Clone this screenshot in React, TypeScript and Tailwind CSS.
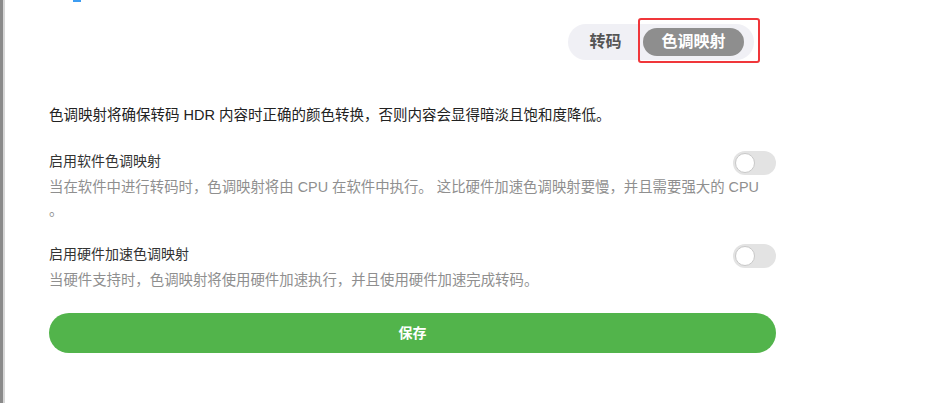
import { useState } from "react";

type ToggleProps = {
  on: boolean;
  onChange: () => void;
};

function Toggle({ on, onChange }: ToggleProps) {
  return (
    <button
      onClick={onChange}
      className={
        on
          ? "relative w-[43px] h-[24px] rounded-full bg-[#52b44b] shrink-0"
          : "relative w-[43px] h-[24px] rounded-full bg-[#e3e3e3] shrink-0"
      }
    >
      <span
        className={
          on
            ? "absolute top-[2px] left-[21px] w-[20px] h-[20px] rounded-full bg-white border border-[#c8c8c8]"
            : "absolute top-[2px] left-[2px] w-[20px] h-[20px] rounded-full bg-white border border-[#c8c8c8]"
        }
      />
    </button>
  );
}

type SettingProps = {
  title: string;
  desc: string;
  on: boolean;
  onChange: () => void;
};

function SettingRow({ title, desc, on, onChange }: SettingProps) {
  return (
    <div>
      <div className="flex items-start justify-between">
        <div className="text-[14px] leading-[20px] text-[#333]">
          {title}
        </div>
        <Toggle on={on} onChange={onChange} />
      </div>
      <div className="mt-[1px] pr-[4px] text-[14.4px] leading-[23px] text-[#8f8f8f]">
        {desc}
      </div>
    </div>
  );
}

export default function App() {
  const [tab, setTab] = useState("tonemap");
  const [soft, setSoft] = useState(false);
  const [hard, setHard] = useState(false);

  return (
    <div
      className="w-[932px] h-[403px] flex bg-white overflow-hidden"
      style={{ fontFamily: '"Liberation Sans", "Noto Sans CJK SC", sans-serif' }}
    >
      <div className="w-[3px] bg-[#8a8a8a]" />
      <div className="w-[2px] bg-[#d6d6d6]" />

      <div className="w-[771px] pl-[44px]">
        <div className="h-[2px] w-[8px] ml-[24px] bg-[#3d9df2]" />

        <div className="flex justify-end pr-[22px] mt-[22px]">
          <div className="relative flex items-center h-[36px] rounded-full bg-[#f0f0f5] pl-[4px] pr-[10px] gap-[4px]">
            <button
              onClick={() => setTab("transcode")}
              className={
                tab === "transcode"
                  ? "w-[67px] h-[28px] rounded-full bg-[#8e8e8e] text-white text-[16px] font-bold"
                  : "w-[67px] h-[28px] rounded-full text-[#555] text-[16px] font-bold"
              }
            >
              转码
            </button>
            <button
              onClick={() => setTab("tonemap")}
              className={
                tab === "tonemap"
                  ? "w-[101px] h-[28px] rounded-full bg-[#8e8e8e] text-white text-[16px] font-bold"
                  : "w-[101px] h-[28px] rounded-full text-[#555] text-[16px] font-bold"
              }
            >
              色调映射
            </button>
            <div className="absolute left-[70px] top-[-6px] w-[122px] h-[45px] border-2 border-[#f0363a] rounded-[3px] pointer-events-none" />
          </div>
        </div>

        <div className="mt-[44px] text-[14.5px] leading-[22px] text-[#222]">
          色调映射将确保转码 HDR 内容时正确的颜色转换，否则内容会显得暗淡且饱和度降低。
        </div>

        <div className="mt-[25px]">
          <SettingRow
            title="启用软件色调映射"
            desc="当在软件中进行转码时，色调映射将由 CPU 在软件中执行。 这比硬件加速色调映射要慢，并且需要强大的 CPU 。"
            on={soft}
            onChange={() => setSoft(!soft)}
          />
        </div>

        <div className="mt-[22px]">
          <SettingRow
            title="启用硬件加速色调映射"
            desc="当硬件支持时，色调映射将使用硬件加速执行，并且使用硬件加速完成转码。"
            on={hard}
            onChange={() => setHard(!hard)}
          />
        </div>

        <button className="mt-[21px] w-full h-[40px] rounded-full bg-[#52b44b] text-white text-[14px] font-bold">
          保存
        </button>
      </div>
    </div>
  );
}
